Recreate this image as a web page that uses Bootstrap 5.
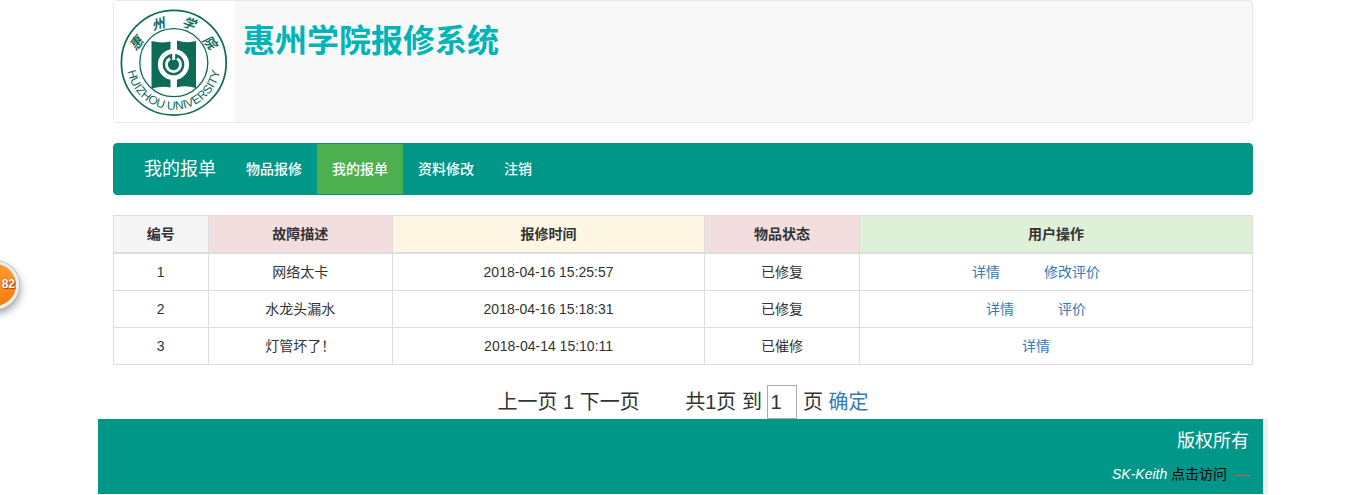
<!DOCTYPE html>
<html lang="zh-CN">
<head>
<meta charset="utf-8">
<meta name="viewport" content="width=device-width, initial-scale=1">
<title>惠州学院报修系统</title>
<link href="https://cdn.jsdelivr.net/npm/bootstrap@5.3.0/dist/css/bootstrap.min.css" rel="stylesheet">
<script src="https://cdn.jsdelivr.net/npm/bootstrap@5.3.0/dist/js/bootstrap.bundle.min.js" defer></script>
<style>
  body { font: 14px/20px "Liberation Sans", "Noto Sans CJK SC", sans-serif; color: #333; padding-left: 2px; }
  a { color: #337ab7; text-decoration: none; }
  .site { max-width: 1170px; }
  .inner { padding: 0 15px; }
  .masthead { background: #f8f8f8; border: 1px solid #e7e7e7; border-radius: 4px; margin-bottom: 20px; }
  .masthead svg { display: block; background: #fff; }
  .masthead h1 { font-size: 32px; line-height: 36px; font-weight: 700; color: #00b4b8; margin: 22px 0 0 8px; }
  .menubar { background: #009688; border: 1px solid #009688; border-radius: 4px; padding: 0 15px; margin-bottom: 20px; }
  .menubar .navbar-brand { font-size: 18px; line-height: 20px; padding: 15px; margin: 0; color: #fff; }
  .menubar .navbar-nav .nav-link { padding: 15px; color: #fff; font-weight: 500; }
  .menubar .navbar-nav .nav-link.active { background: #4caf50; color: #fff; }
  .orders { table-layout: fixed; text-align: center; margin-bottom: 20px; border-collapse: collapse; color: #333; }
  .orders > :not(caption) > * > * { padding: 8px; border: 1px solid #ddd; line-height: 20px; }
  .orders > thead > tr > th { border-bottom-width: 2px; }
  .orders > thead > tr > .tone-grey { background: #f5f5f5; }
  .orders > thead > tr > .tone-red { background: #f2dede; }
  .orders > thead > tr > .tone-yellow { background: #fdf7e3; }
  .orders > thead > tr > .tone-green { background: #dff0d8; }
  .c-id { width: 8.3%; } .c-desc { width: 16.2%; } .c-time { width: 27.4%; } .c-state { width: 13.6%; }
  .orders td a { margin-right: 40px; }
  .pager-line { font-size: 20px; line-height: 34px; }
  .pager-line input { width: 30px; height: 34px; padding: 1px 2px; border: 1px solid #a9a9a9; color: #333; vertical-align: top; }
  .pager-line .total { margin-left: 40px; }
  .foot-wrap { background: #eee; padding-right: 5px; }
  .foot { background: #009688; color: #fff; text-align: right; padding: 10px 14px; }
  .foot h2 { font-size: 18px; line-height: 24px; font-weight: 400; margin: 0 0 11px; }
  .foot a { color: #000; }
  .foot .dash { color: #d0605c; margin-left: 4px; }
  .bubble { left: -29px; top: 261px; width: 48px; height: 48px; border-radius: 50%; background: linear-gradient(#ff9a35, #f57c0c); border: 3px solid #eee; box-shadow: 0 0 0 1px #bbb, 1px 4px 8px rgba(0,0,0,.4); color: #fff; font: 700 12px/40px "Liberation Sans", sans-serif; text-align: right; padding-right: 1px; text-shadow: 0 0 1px #a40, 1px 1px 1px #a40; }
</style>
</head>
<body>
<div class="container-fluid site px-0">
  <div class="inner">
    <header class="masthead d-flex align-items-start">
      <svg width="121" height="121" viewBox="0 0 121 121" role="img" aria-label="惠州学院校徽">
        <defs><path id="ring" d="M12.800 61.700a47 47 0 0 0 94 0"/></defs>
        <g fill="none" stroke="#0d6b58"><circle cx="59.800" cy="61.700" r="52.400" stroke-width="1.700"/><circle cx="59.800" cy="61.700" r="34" stroke-width="1.300"/></g>
        <path fill="#0d6b58" d="M37.500 40q9 2.500 19 .500v46q-8-2-19 1zM82 40q-9 2.500-19-.500v47q8-2.500 19 .500z"/>
        <circle cx="59.500" cy="63.500" r="13.200" fill="#0d6b58" stroke="#fff" stroke-width="4.800"/>
        <path d="M56 57.500a7 7 0 1 0 7 0" fill="none" stroke="#fff" stroke-width="2.800"/>
        <path d="M59.700 50v9" stroke="#fff" stroke-width="3"/>
        <g fill="#0d6b58" font-family="'Noto Sans CJK SC', sans-serif" font-weight="700" font-size="13" font-style="italic" text-anchor="middle">
          <text transform="translate(22 42) rotate(-50)" y="5">惠</text>
          <text transform="translate(44 23) rotate(-16)" y="5">州</text>
          <text transform="translate(75 22) rotate(20)" y="5">学</text>
          <text transform="translate(96 41) rotate(50)" y="5">院</text>
        </g>
        <text fill="#0d6b58" font-family="'Liberation Sans', sans-serif" font-size="12" text-anchor="middle"><textPath href="#ring" startOffset="50%">HUIZHOU UNIVERSITY</textPath></text>
      </svg>
      <h1>惠州学院报修系统</h1>
    </header>

    <nav class="menubar navbar navbar-expand">
      <a class="navbar-brand" href="#">我的报单</a>
      <ul class="navbar-nav">
        <li class="nav-item"><a class="nav-link" href="#">物品报修</a></li>
        <li class="nav-item"><a class="nav-link active" aria-current="page" href="#">我的报单</a></li>
        <li class="nav-item"><a class="nav-link" href="#">资料修改</a></li>
        <li class="nav-item"><a class="nav-link" href="#">注销</a></li>
      </ul>
    </nav>

    <table class="table orders">
      <thead>
        <tr>
          <th class="c-id tone-grey" scope="col">编号</th>
          <th class="c-desc tone-red" scope="col">故障描述</th>
          <th class="c-time tone-yellow" scope="col">报修时间</th>
          <th class="c-state tone-red" scope="col">物品状态</th>
          <th class="tone-green" scope="col">用户操作</th>
        </tr>
      </thead>
      <tbody>
        <tr><td>1</td><td>网络太卡</td><td>2018-04-16 15:25:57</td><td>已修复</td><td><a href="#">详情</a> <a href="#">修改评价</a></td></tr>
        <tr><td>2</td><td>水龙头漏水</td><td>2018-04-16 15:18:31</td><td>已修复</td><td><a href="#">详情</a> <a href="#">评价</a></td></tr>
        <tr><td>3</td><td>灯管坏了！</td><td>2018-04-14 15:10:11</td><td>已催修</td><td><a href="#">详情</a></td></tr>
      </tbody>
    </table>

    <form class="pager-line text-center">
      <span>上一页 1 下一页</span>
      <span class="total">共1页</span> <label for="page">到</label>
      <input id="page" type="text" value="1"> 页
      <a href="#">确定</a>
    </form>
  </div>

  <div class="foot-wrap">
    <footer class="foot">
      <h2>版权所有</h2>
      <div><em>SK-Keith</em> <a href="#">点击访问</a> <span class="dash">—</span></div>
    </footer>
  </div>
</div>
<div class="bubble position-absolute">82</div>
</body>
</html>
